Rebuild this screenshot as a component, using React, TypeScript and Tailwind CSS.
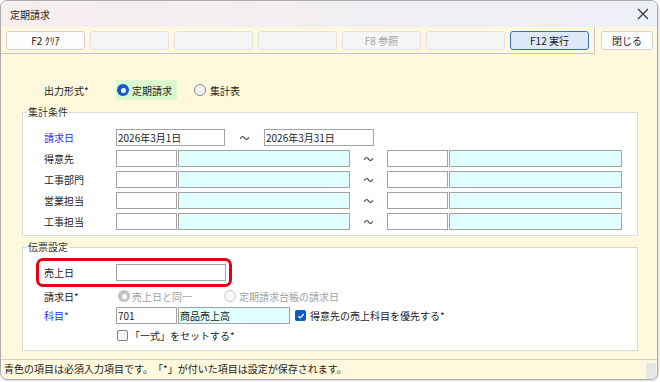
import type { ReactNode } from 'react'

function Radio({ checked, disabled }: { checked?: boolean; disabled?: boolean }) {
  if (checked) {
    return (
      <span
        className={`w-[12px] h-[12px] rounded-full flex items-center justify-center shrink-0 ${
          disabled ? 'bg-[#c2c2c2]' : 'bg-[#0d5cc2]'
        }`}
      >
        <span className="w-[5px] h-[5px] rounded-full bg-white" />
      </span>
    )
  }
  return (
    <span
      className={`w-[12px] h-[12px] rounded-full border shrink-0 ${
        disabled ? 'border-[#c9c9c9] bg-[#f8f8f8]' : 'border-[#8a8a8a] bg-[#f4f4f4]'
      }`}
    />
  )
}

function Check({ checked }: { checked?: boolean }) {
  if (checked) {
    return (
      <span className="w-[11px] h-[11px] rounded-[2px] bg-[#0d5cc2] flex items-center justify-center shrink-0">
        <svg width="8" height="8" viewBox="0 0 8 8">
          <path d="M1.3 4.2 L3.2 6 L6.8 2" fill="none" stroke="white" strokeWidth="1.2" />
        </svg>
      </span>
    )
  }
  return <span className="w-[11px] h-[11px] rounded-[2px] border border-[#7f7f7f] bg-[#f6f6f6] shrink-0" />
}

function Box({ w, cyan, children }: { w: string; cyan?: boolean; children?: ReactNode }) {
  return (
    <div
      className={`${w} h-[17px] border border-[#a3a3a3] px-[1px] leading-[15px] whitespace-nowrap overflow-hidden ${
        cyan ? 'bg-[#e0ffff]' : 'bg-white'
      }`}
    >
      {children}
    </div>
  )
}

function ToolButton({ label, kind }: { label?: string; kind?: 'normal' | 'off' | 'primary' }) {
  const cls =
    kind === 'normal'
      ? 'bg-[#fdfdfd] border-[#cfcfcf] text-[#1a1a1a]'
      : kind === 'primary'
        ? 'bg-[#dde9f6] border-[#3573c2] text-[#1a1a1a]'
        : 'bg-[#f5f5f5] border-[#e2e2e2] text-[#a3a3a3]'
  return (
    <div className={`w-[79px] h-[19px] rounded-[3px] border flex items-center justify-center ${cls}`}>
      {label}
    </div>
  )
}

function RangeRow({ label }: { label: string }) {
  return (
    <div className="flex items-center h-[17px]">
      <span className="w-[72px]">{label}</span>
      <Box w="w-[61px]" />
      <div className="w-[1px]" />
      <Box w="w-[172px]" cyan />
      <span className="w-[37px] text-center">～</span>
      <Box w="w-[61px]" />
      <div className="w-[1px]" />
      <Box w="w-[173px]" cyan />
    </div>
  )
}

export default function App() {
  return (
    <div className="w-[660px] h-[382px] bg-white font-['Noto_Sans_CJK_JP',sans-serif] text-[10px] text-[#1c1c1c] [text-spacing-trim:space-all]">
      <div className="w-[658px] h-[380px] rounded-[7px] border border-[#ababab] overflow-hidden flex flex-col bg-[#fff8dc] shadow-[1px_1px_2px_rgba(0,0,0,0.15)]">
        {/* title */}
        <div className="h-[26px] shrink-0 flex items-center justify-between pl-[9px] pr-[8px] bg-gradient-to-r from-[#f7eeee] to-[#edf0f7]">
          <span>定期請求</span>
          <svg width="12" height="12" viewBox="0 0 12 12">
            <path d="M1 1 L11 11 M11 1 L1 11" stroke="#333" strokeWidth="1.1" />
          </svg>
        </div>

        {/* toolbar */}
        <div className="h-[27px] shrink-0 flex">
          <div className="w-[594px] h-[27px] border-r border-b border-[#c6c6c6] flex gap-[5px] pl-[5px] pt-[4px]">
            <ToolButton label="F2 ｸﾘｱ" kind="normal" />
            <ToolButton />
            <ToolButton />
            <ToolButton />
            <ToolButton label="F8 参照" />
            <ToolButton />
            <ToolButton label="F12 実行" kind="primary" />
          </div>
          <div className="pl-[6px] pt-[4px]">
            <div className="w-[52px] h-[19px] rounded-[3px] border border-[#d2d2d2] bg-[#fdfdfd] flex items-center justify-center">
              閉じる
            </div>
          </div>
        </div>

        {/* content */}
        <div className="flex-1 pl-[21px]">
          <div className="mt-[26px] h-[20px] flex items-center pl-[22px]">
            <span className="w-[72px]">出力形式*</span>
            <div className="h-[20px] flex items-center gap-[3px] pl-[1px] pr-[5px] bg-[#daf7d0]">
              <Radio checked />
              <span>定期請求</span>
            </div>
            <div className="ml-[17px] flex items-center gap-[4px]">
              <Radio />
              <span>集計表</span>
            </div>
          </div>

          <fieldset className="mt-[5px] w-[616px] border border-[#dadada] bg-white pb-[5px]">
            <legend className="ml-[4px] px-[1px] h-[14px] leading-[14px] text-[#333]">集計条件</legend>
            <div className="pt-[10px] pl-[21px] flex flex-col gap-[4px]">
              <div className="flex items-center h-[17px]">
                <span className="w-[72px] text-[#2035ee]">請求日</span>
                <Box w="w-[109px]">2026年3月1日</Box>
                <span className="w-[39px] text-center">～</span>
                <Box w="w-[110px]">2026年3月31日</Box>
              </div>
              <RangeRow label="得意先" />
              <RangeRow label="工事部門" />
              <RangeRow label="営業担当" />
              <RangeRow label="工事担当" />
            </div>
          </fieldset>

          <fieldset className="mt-[4px] w-[616px] border border-[#dadada] bg-white pb-[7px]">
            <legend className="ml-[4px] px-[1px] h-[14px] leading-[14px] text-[#333]">伝票設定</legend>
            <div className="pt-[4px]">
              <div className="ml-[13px] w-[196px] h-[29px] border-[3px] border-[#e60012] rounded-[7px] pl-[5px] flex items-center">
                <span className="w-[72px]">売上日</span>
                <Box w="w-[110px]" />
              </div>
              <div className="mt-[1px] h-[16px] pl-[21px] flex items-center">
                <span className="w-[72px]">請求日*</span>
                <div className="ml-[2px] flex items-center gap-[1px] text-[#a0a0a0]">
                  <Radio checked disabled />
                  <span className="ml-[1px]">売上日と同一</span>
                </div>
                <div className="ml-[32px] flex items-center gap-[3px] text-[#a0a0a0]">
                  <Radio disabled />
                  <span>定期請求台帳の請求日</span>
                </div>
              </div>
              <div className="mt-[3px] h-[17px] pl-[21px] flex items-center">
                <span className="w-[72px] text-[#2035ee]">科目*</span>
                <Box w="w-[61px]">701</Box>
                <div className="w-[1px]" />
                <Box w="w-[112px]" cyan>
                  商品売上高
                </Box>
                <div className="ml-[5px] flex items-center gap-[4px]">
                  <Check checked />
                  <span>得意先の売上科目を優先する*</span>
                </div>
              </div>
              <div className="mt-[3px] h-[16px] pl-[94px] flex items-center gap-[2px]">
                <Check />
                <span>「一式」をセットする*</span>
              </div>
            </div>
          </fieldset>
        </div>

        {/* status */}
        <div className="h-[20px] shrink-0 border-t border-[#cfcfcf] flex items-stretch">
          <span className="pl-[3px] leading-[18px]">
            青色の項目は必須入力項目です。「*」が付いた項目は設定が保存されます。
          </span>
          <div className="ml-auto mr-[1px] mt-[3px] w-[10px] bg-[#e6e6e6]" />
        </div>
      </div>
    </div>
  )
}
